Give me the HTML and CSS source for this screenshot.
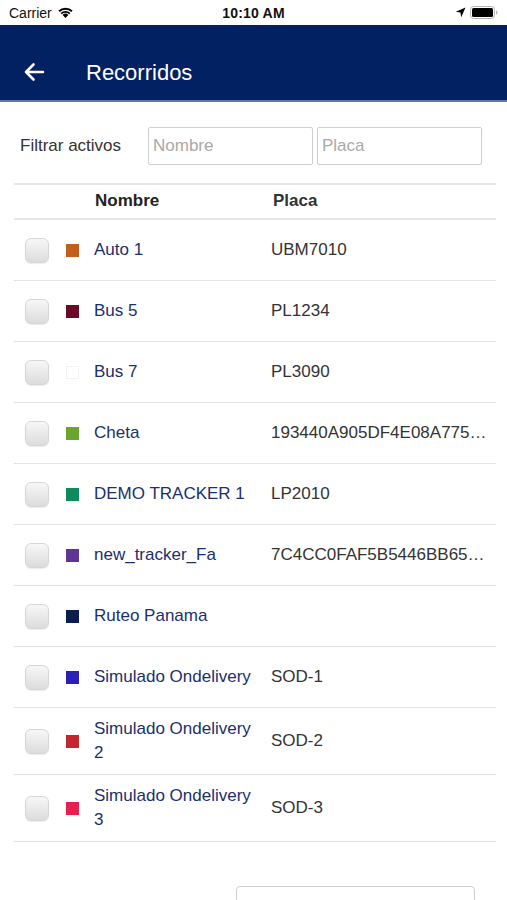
FILE: index.html
```html
<!DOCTYPE html>
<html lang="es">
<head>
<meta charset="utf-8">
<title>Recorridos</title>
<link rel="stylesheet" href="styles.css">
</head>
<body>
<div class="status">
  <div class="status-left">Carrier
    <svg class="wifi" width="17" height="12" viewBox="0 0 17 12"><path d="M8.5 12 L5.6 8.9 A4.2 4.2 0 0 1 11.4 8.9 Z" fill="#000"/><path d="M3.6 6.9 A7 7 0 0 1 13.4 6.9 L12.1 8.2 A5.2 5.2 0 0 0 4.9 8.2 Z" fill="#000"/><path d="M1.4 4.6 A10.2 10.2 0 0 1 15.6 4.6 L14.2 6 A8.2 8.2 0 0 0 2.8 6 Z" fill="#000"/></svg>
  </div>
  <div class="status-time">10:10 AM</div>
  <div class="status-right">
    <svg width="11" height="11" viewBox="0 0 11 11"><path d="M10.5 0.5 L0.8 4.8 L5.4 5.6 L6.2 10.2 Z" fill="#000"/></svg>
    <svg width="28" height="13" viewBox="0 0 28 13"><rect x="0.5" y="0.5" width="24" height="12" rx="3" fill="none" stroke="#b5b5b5"/><rect x="2" y="2" width="21" height="9" rx="1.5" fill="#000"/><path d="M26 4.5 a1.5 2 0 0 1 0 4 Z" fill="#b5b5b5"/></svg>
  </div>
</div>
<header class="navbar">
  <svg class="back" width="22" height="20" viewBox="0 0 22 20"><path d="M20 10 H3 M10.5 2.5 L3 10 L10.5 17.5" fill="none" stroke="#fff" stroke-width="2.6" stroke-linecap="round" stroke-linejoin="round"/></svg>
  <h1 class="title">Recorridos</h1>
</header>
<main class="content">
  <div class="filter">
    <span class="filter-label">Filtrar activos</span>
    <input class="field" placeholder="Nombre">
    <input class="field" placeholder="Placa">
  </div>
  <div class="table">
    <div class="row head">
      <div class="c-check"></div>
      <div class="c-color"></div>
      <div class="c-name">Nombre</div>
      <div class="c-plate">Placa</div>
    </div>
    <div class="row"><div class="c-check"><span class="box"></span></div><div class="c-color"><span class="sq" style="background:#c0601c"></span></div><div class="c-name">Auto 1</div><div class="c-plate">UBM7010</div></div>
    <div class="row"><div class="c-check"><span class="box"></span></div><div class="c-color"><span class="sq" style="background:#6a0a26"></span></div><div class="c-name">Bus 5</div><div class="c-plate">PL1234</div></div>
    <div class="row"><div class="c-check"><span class="box"></span></div><div class="c-color"><span class="sq sq-white" style="background:#ffffff"></span></div><div class="c-name">Bus 7</div><div class="c-plate">PL3090</div></div>
    <div class="row"><div class="c-check"><span class="box"></span></div><div class="c-color"><span class="sq" style="background:#6aa52e"></span></div><div class="c-name">Cheta</div><div class="c-plate">193440A905DF4E08A775…</div></div>
    <div class="row"><div class="c-check"><span class="box"></span></div><div class="c-color"><span class="sq" style="background:#0e8a5c"></span></div><div class="c-name">DEMO TRACKER 1</div><div class="c-plate">LP2010</div></div>
    <div class="row"><div class="c-check"><span class="box"></span></div><div class="c-color"><span class="sq" style="background:#5e3594"></span></div><div class="c-name">new_tracker_Fa</div><div class="c-plate">7C4CC0FAF5B5446BB65…</div></div>
    <div class="row"><div class="c-check"><span class="box"></span></div><div class="c-color"><span class="sq" style="background:#0b1d4b"></span></div><div class="c-name">Ruteo Panama</div><div class="c-plate"></div></div>
    <div class="row"><div class="c-check"><span class="box"></span></div><div class="c-color"><span class="sq" style="background:#2c1fb5"></span></div><div class="c-name">Simulado Ondelivery</div><div class="c-plate">SOD-1</div></div>
    <div class="row"><div class="c-check"><span class="box"></span></div><div class="c-color"><span class="sq" style="background:#c1272d"></span></div><div class="c-name">Simulado Ondelivery 2</div><div class="c-plate">SOD-2</div></div>
    <div class="row"><div class="c-check"><span class="box"></span></div><div class="c-color"><span class="sq" style="background:#ea1f4f"></span></div><div class="c-name">Simulado Ondelivery 3</div><div class="c-plate">SOD-3</div></div>
  </div>
  <div class="actions">
    <button class="btn"></button>
  </div>
</main>
</body>
</html>
```
FILE: styles.css
```css
html, body {
  margin: 0;
  padding: 0;
  background: #fff;
  font-family: "Liberation Sans", Arial, sans-serif;
  overflow: hidden;
  height: 900px;
}
.status {
  height: 25px;
  display: flex;
  align-items: center;
  justify-content: space-between;
  padding: 0 9px 0 9px;
  font-size: 14px;
  color: #111;
}
.status-left {
  display: flex;
  align-items: center;
  gap: 5px;
  width: 120px;
}
.wifi { margin-top: -2px; }
.status-time {
  font-weight: bold;
  font-size: 14px;
  letter-spacing: 0.2px;
}
.status-right {
  width: 120px;
  display: flex;
  justify-content: flex-end;
  align-items: center;
  gap: 4px;
}
.navbar {
  background: #022163;
  border-bottom: 2px solid #5f79a6;
  display: flex;
  align-items: flex-end;
  padding: 0 0 14px 23px;
  box-sizing: border-box;
  height: 77px;
}
.back { margin-bottom: 4px; }
.title {
  margin: 0 0 0 41px;
  color: #fff;
  font-weight: normal;
  font-size: 22px;
  line-height: 26px;
}
.content {
  padding: 0 11px 0 14px;
}
.filter {
  display: flex;
  align-items: center;
  height: 38px;
  margin-top: 25px;
  padding-left: 6px;
}
.filter-label {
  font-size: 17px;
  color: #333;
  width: 128px;
}
.field {
  width: 165px;
  height: 38px;
  box-sizing: border-box;
  border: 1px solid #cfcfcf;
  border-radius: 2px;
  font-family: "Liberation Sans", Arial, sans-serif;
  font-size: 17px;
  padding: 0 4px;
  margin: 0 4px 0 0;
  color: #333;
  outline: none;
}
.field::placeholder { color: #a9a9a9; }
.table {
  margin-top: 18px;
  border-top: 2px solid #e6e6e6;
}
.row {
  display: flex;
  align-items: center;
  min-height: 42px;
  padding: 9px 0;
  border-bottom: 1px solid #e3e3e3;
  font-size: 17px;
  line-height: 24px;
}
.row.head {
  min-height: 0;
  padding: 4px 0 5px;
  border-bottom: 2px solid #e6e6e6;
  font-weight: bold;
  color: #222;
}
.row.head .c-name { padding-left: 1px; }
.row.head .c-plate { padding-left: 2px; }
.c-check {
  width: 52px;
  flex: none;
  display: flex;
  align-items: center;
  padding-left: 11px;
  box-sizing: border-box;
}
.box {
  width: 24px;
  height: 25px;
  box-sizing: border-box;
  border: 1px solid #d6d6d6;
  border-radius: 6px;
  background: linear-gradient(#f7f7f7, #dcdcdc);
  box-shadow: 0 1px 1px rgba(0,0,0,0.08);
}
.c-color {
  width: 28px;
  flex: none;
  display: flex;
  align-items: center;
}
.sq {
  width: 13px;
  height: 13px;
  display: block;
}
.sq-white { border: 1px solid #f2f2f2; box-sizing: border-box; }
.c-name {
  width: 177px;
  flex: none;
  color: #1b2f6e;
  padding-right: 12px;
  box-sizing: border-box;
}
.row.head .c-name { color: #222; }
.c-plate {
  flex: 1;
  min-width: 0;
  color: #333;
  white-space: nowrap;
}
.actions {
  display: flex;
  justify-content: flex-end;
  padding: 44px 21px 0 0;
}
.btn {
  width: 239px;
  height: 40px;
  border: 1px solid #cfcfcf;
  border-radius: 4px;
  background: #fff;
}
```
